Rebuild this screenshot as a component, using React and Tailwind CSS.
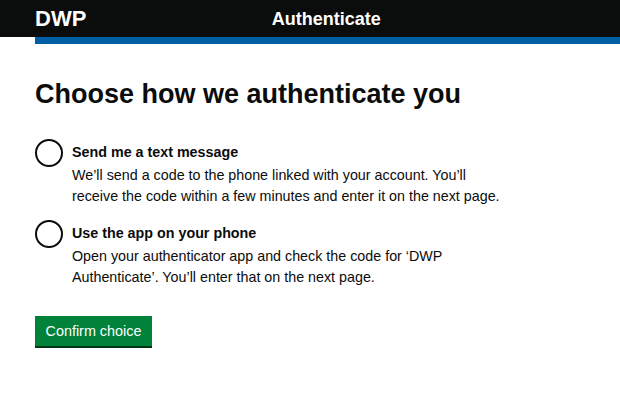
export default function App() {
  const options = [
    {
      title: "Send me a text message",
      lines: [
        "We’ll send a code to the phone linked with your account. You’ll",
        "receive the code within a few minutes and enter it on the next page.",
      ],
    },
    {
      title: "Use the app on your phone",
      lines: [
        "Open your authenticator app and check the code for ‘DWP",
        "Authenticate’. You’ll enter that on the next page.",
      ],
    },
  ];

  return (
    <div className="w-[620px] h-[413px] bg-white overflow-hidden font-['Liberation_Sans',Arial,sans-serif] text-[#0b0c0c]">
      {/* header */}
      <header className="bg-[#0b0c0c] h-[37px] flex items-center px-[35px]">
        <span className="text-white font-bold text-[22px] leading-none">DWP</span>
        <span className="flex-1 text-center text-white font-bold text-[18px] leading-none pr-[19px]">
          Authenticate
        </span>
      </header>
      <div className="pl-[35px]">
        <div className="h-[7px] bg-[#005ea5]" />
      </div>

      <main className="px-[35px] pt-[34px]">
        <h1 className="font-bold text-[27px] leading-[32px]">Choose how we authenticate you</h1>

        <div className="mt-[29px] flex flex-col gap-[13px]">
          {options.map((o) => (
            <label key={o.title} className="flex gap-[9px]">
              <span className="w-[28px] h-[28px] rounded-full border-2 border-[#0b0c0c] shrink-0" />
              <span className="flex flex-col pt-[3px]">
                <span className="font-bold text-[14.3px] leading-[20px]">{o.title}</span>
                <span className="text-[14.3px] leading-[21px] mt-[3px]">
                  {o.lines.map((l) => (
                    <span key={l} className="block">{l}</span>
                  ))}
                </span>
              </span>
            </label>
          ))}
        </div>

        <button className="mt-[28px] w-[117px] h-[30px] bg-[#00823b] text-white text-[14.4px] leading-none shadow-[0_2px_0_#003618]">
          Confirm choice
        </button>
      </main>
    </div>
  );
}
